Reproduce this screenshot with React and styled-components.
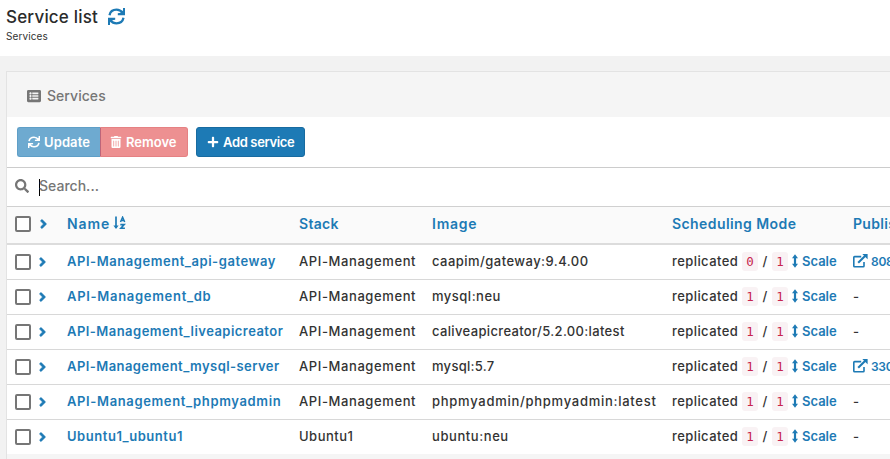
import React from 'react';
import styled, { createGlobalStyle, css } from 'styled-components';
import {
  FaTrashAlt,
  FaPlus,
  FaSearch,
  FaAngleRight,
  FaListAlt,
} from 'react-icons/fa';

const BLUE = '#1d7ab5';

const GlobalStyle = createGlobalStyle`
  * { box-sizing: border-box; }
  body {
    margin: 0;
    overflow: hidden;
    background: #f2f2f2;
    color: #333;
    font-family: Inter, "Open Sans", sans-serif;
  }
`;

const Page = styled.div`
  width: 890px;
  height: 459px;
  overflow: hidden;
`;

const PageHeader = styled.header`
  height: 56px;
  padding: 5px 6px 0;
  background: #fff;
`;

const Title = styled.h1`
  display: flex;
  align-items: center;
  gap: 10px;
  height: 24px;
  margin: 0;
  font-size: 17px;
  font-weight: 500;
  letter-spacing: 0.2px;
  color: #2b2b2b;

  svg { width: 17px; height: 17px; margin-top: -1px; color: ${BLUE}; }
`;

const Breadcrumb = styled.div`
  font-size: 10px;
  line-height: 14px;
  letter-spacing: 0.1px;
`;

const Panel = styled.section`
  width: 1200px;
  height: 420px;
  margin: 15px 0 0 6px;
  border: 1px solid #e3e3e3;
  background: #f5f5f5;
`;

const PanelTitle = styled.div`
  display: flex;
  align-items: center;
  gap: 6px;
  height: 45px;
  padding: 2px 0 0 20px;
  font-size: 14px;
  font-weight: 500;
  color: #767676;

  svg { width: 14px; height: 14px; }
`;

const Toolbar = styled.div`
  display: flex;
  gap: 8px;
  height: 50px;
  padding: 10px;
  background: #fff;
`;

const ButtonGroup = styled.div`
  display: flex;
`;

const buttonTones = {
  update: css`width: 83px; background: #6eaad0; border-color: #5f9fc7; border-right: 0; border-radius: 3px 0 0 3px;`,
  remove: css`width: 88px; padding-left: 9px; background: #ed9091; border-color: #e58183; border-left-color: #bd6579; border-radius: 0 3px 3px 0;`,
  add: css`width: 109px; background: ${BLUE}; border-color: #186ba0; border-radius: 3px;`,
};

const Button = styled.button`
  display: flex;
  align-items: center;
  gap: 4px;
  height: 30px;
  padding: 0 0 1px 10px;
  border: 1px solid;
  font: 600 13px Inter, sans-serif;
  letter-spacing: ${(p) => p.$track}px;
  white-space: nowrap;
  color: #fff;
  ${(p) => buttonTones[p.$tone]}

  svg { width: 12px; height: 12px; flex: none; }
`;

const SearchBar = styled.div`
  display: flex;
  align-items: center;
  height: 39px;
  padding: 0 0 3px 8px;
  border-top: 1px solid #ccc;
  background: #fff;
  font-size: 14px;
  font-weight: 500;
  color: #767676;

  svg { width: 14px; height: 14px; }
`;

const Caret = styled.span`
  width: 1px;
  height: 17px;
  margin: 4px -1px 0 10px;
  background: #000;
`;

const Table = styled.div`
  background: #fff;
  font-size: 13px;
  font-weight: 500;
`;

const Row = styled.div`
  display: grid;
  grid-template-columns: 60px 232px 133px 240px 181px 1fr;
  align-items: center;
  height: 35px;
  border-bottom: 1px solid #d8d8d8;

  &:last-child { height: 34px; border-bottom: 0; }
`;

const Cell = styled.div`
  display: flex;
  align-items: center;
  height: 20px;
  padding-bottom: 1px;
  margin-bottom: 1px;
  white-space: nowrap;
`;

const Select = styled(Cell)`
  gap: ${(p) => (p.$head ? 9 : 8)}px;
  height: 16px;
  padding: 0 0 0 8px;
  margin-bottom: ${(p) => (p.$head ? 2 : 0)}px;
  color: ${BLUE};

  svg { width: 7px; height: 14px; margin-top: -1px; stroke: currentColor; stroke-width: 22px; }
`;

const HeadRow = styled(Row)`
  height: 39px;
  border-top: 1px solid #d0d0d0;
  border-bottom: 2px solid #dcdcdc;
  background: #fafafa;
  font-size: 14px;
  font-weight: 600;
  color: ${BLUE};
`;

const HeadCell = styled(Cell)`
  margin-bottom: 3px;
`;

const Checkbox = styled.span`
  width: 16px;
  height: 16px;
  border: 2px solid #767676;
  border-radius: 2px;
  background: #fff;
`;

const Label = styled.span`
  letter-spacing: ${(p) => p.$track}px;
`;

const Link = styled(Label)`
  font-weight: 600;
  color: ${BLUE};
`;

const SortSvg = styled.svg`
  width: 13px;
  height: 14px;
  margin-left: 3px;
`;

const Replicas = styled.code`
  width: 16px;
  border-radius: 3px;
  background: #f9f2f4;
  font: 12.5px/19px "DejaVu Sans Mono", monospace;
  text-align: center;
  color: #c7254e;
`;

const Slash = styled.span`
  width: 14px;
  text-align: center;
`;

const Mode = styled(Label)`
  width: 70px;
`;

const ScaleSvg = styled.svg`
  width: 6px;
  height: 14px;
  margin: 0 4px;
`;

const PortSvg = styled.svg`
  width: 15px;
  height: 14px;
  margin-right: 3px;
`;

const Port = styled(Link)`
  font-size: 12px;
`;

function RefreshIcon() {
  return (
    <svg viewBox="0 0 17 17" fill="none" stroke="currentColor" strokeWidth="2.3">
      <path d="M1.5 7.2C2.2 3.8 5 1.7 8.5 1.7C11.2 1.7 13.1 2.8 14.6 4.8" />
      <path d="M15.5 9.8C14.8 13.2 12 15.3 8.5 15.3C5.8 15.3 3.9 14.2 2.4 12.2" />
      <path d="M17 0V7.2H9.8V5.3L12.6 4.8L15 2.4V0Z" fill="currentColor" stroke="none" />
      <path d="M0 17V9.8H7.2V11.7L4.4 12.2L2 14.6V17Z" fill="currentColor" stroke="none" />
    </svg>
  );
}

function SortIcon() {
  return (
    <SortSvg viewBox="0 0 13 14" fill="none" stroke={BLUE}>
      <path d="M3 0.5V12" strokeWidth="1.7" />
      <path d="M0.4 9.6H5.6L3 12.9Z" fill={BLUE} stroke="none" />
      <path d="M7.5 6L9.6 1.2L11.7 6M8.3 4.5H10.9" strokeWidth="1.5" />
      <path d="M7.3 8.6H11.2L7.9 12.2H11.9" strokeWidth="1.6" />
    </SortSvg>
  );
}

function ScaleIcon() {
  return (
    <ScaleSvg viewBox="0 0 6 14" fill={BLUE}>
      <path d="M3 0.3L6 4.2H4.1V9.8H6L3 13.7L0 9.8H1.9V4.2H0Z" />
    </ScaleSvg>
  );
}

function PortIcon() {
  return (
    <PortSvg viewBox="0 0 15 14" fill="none" stroke={BLUE}>
      <path d="M8.2 2.6H1.6Q0.8 2.6 0.8 3.4V12Q0.8 12.8 1.6 12.8H10.2Q11 12.8 11 12V8" strokeWidth="1.6" />
      <path d="M5.2 8.8L12.3 1.8" strokeWidth="2.1" />
      <path d="M9.3 0H14.6V5.3Z" fill={BLUE} stroke="none" />
    </PortSvg>
  );
}

const services = [
  { name: 'API-Management_api-gateway', nt: 0.55, stack: 'API-Management', st: 0.6, image: 'caapim/gateway:9.4.00', it: 0.46, running: 0, port: '8080:8080' },
  { name: 'API-Management_db', nt: 0.7, stack: 'API-Management', st: 0.6, image: 'mysql:neu', it: 0.5, running: 1 },
  { name: 'API-Management_liveapicreator', nt: 0.46, stack: 'API-Management', st: 0.6, image: 'caliveapicreator/5.2.00:latest', it: 0.35, running: 1 },
  { name: 'API-Management_mysql-server', nt: 0.43, stack: 'API-Management', st: 0.6, image: 'mysql:5.7', it: 0.28, running: 1, port: '3306:3306' },
  { name: 'API-Management_phpmyadmin', nt: 0.63, stack: 'API-Management', st: 0.6, image: 'phpmyadmin/phpmyadmin:latest', it: 0.73, running: 1 },
  { name: 'Ubuntu1_ubuntu1', nt: 0.54, stack: 'Ubuntu1', st: 0.5, image: 'ubuntu:neu', it: 0.58, running: 1 },
];

function ServiceRow({ service }) {
  return (
    <Row>
      <Select><Checkbox /><FaAngleRight /></Select>
      <Cell><Link $track={service.nt}>{service.name}</Link></Cell>
      <Cell><Label $track={service.st}>{service.stack}</Label></Cell>
      <Cell><Label $track={service.it}>{service.image}</Label></Cell>
      <Cell>
        <Mode $track={0.42}>replicated</Mode>
        <Replicas>{service.running}</Replicas>
        <Slash>/</Slash>
        <Replicas>1</Replicas>
        <ScaleIcon />
        <Link $track={0}>Scale</Link>
      </Cell>
      <Cell>
        {service.port ? <><PortIcon /><Port $track={-0.3}>{service.port}</Port></> : '-'}
      </Cell>
    </Row>
  );
}

export default function App() {
  return (
    <Page>
      <GlobalStyle />
      <PageHeader>
        <Title>Service list <RefreshIcon /></Title>
        <Breadcrumb>Services</Breadcrumb>
      </PageHeader>
      <Panel>
        <PanelTitle><FaListAlt /> <Label $track={0.05}>Services</Label></PanelTitle>
        <Toolbar>
          <ButtonGroup>
            <Button $tone="update" $track={0.1}><RefreshIcon /> Update</Button>
            <Button $tone="remove" $track={0}><FaTrashAlt /> Remove</Button>
          </ButtonGroup>
          <Button $tone="add" $track={-0.35}><FaPlus /> Add service</Button>
        </Toolbar>
        <SearchBar>
          <FaSearch /><Caret /><Label $track={0.02}>Search...</Label>
        </SearchBar>
        <Table>
          <HeadRow>
            <Select $head><Checkbox /><FaAngleRight /></Select>
            <HeadCell><Label $track={0.9}>Name</Label><SortIcon /></HeadCell>
            <HeadCell><Label $track={0.3}>Stack</Label></HeadCell>
            <HeadCell><Label $track={0.75}>Image</Label></HeadCell>
            <HeadCell><Label $track={0.42}>Scheduling Mode</Label></HeadCell>
            <HeadCell><Label $track={0.3}>Published Ports</Label></HeadCell>
          </HeadRow>
          {services.map((service) => (
            <ServiceRow key={service.name} service={service} />
          ))}
        </Table>
      </Panel>
    </Page>
  );
}
